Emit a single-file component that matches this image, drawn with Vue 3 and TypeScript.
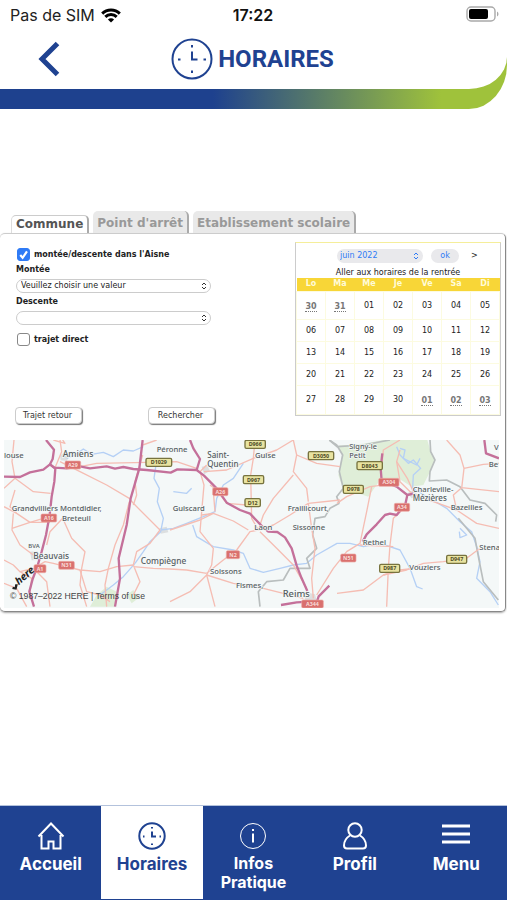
<script setup lang="ts">
import { ref } from 'vue'

interface Day { n: string; outside?: boolean }
interface MapLabel { t: string; x: number; y: number; s?: number }
interface Shield { t: string; x: number; y: number; w: number; kind: 'red' | 'yellow' }

const tabs = ['Commune', "Point d'arrêt", 'Etablissement scolaire']
const activeTab = ref(0)
const inAisne = ref(true)
const direct = ref(false)

const weekdays = ['Lo', 'Ma', 'Me', 'Je', 'Ve', 'Sa', 'Di']
const pad = (n: number) => String(n).padStart(2, '0')
const days: Day[] = [
  { n: '30', outside: true },
  { n: '31', outside: true },
  ...Array.from({ length: 30 }, (_, i) => ({ n: pad(i + 1) })),
  { n: '01', outside: true },
  { n: '02', outside: true },
  { n: '03', outside: true },
]
const weeks = Array.from({ length: 5 }, (_, i) => days.slice(i * 7, i * 7 + 7))

const motorways = [
  'M138 15L162 44L158 72L150 88L166 100L163 140L155 185L149 240L138 300L125 350L112 395L98 432L88 470L102 515',
  'M12 125L60 126L90 112L130 104L150 88L162 98L200 100L240 94L270 100L320 94L345 101L370 96L400 102L440 105L512 113L532 103L590 105L612 122L650 160L680 203L720 225L750 236L790 278L805 290L832 291L855 307L875 340L890 392L905 430L922 468',
  'M428 15L418 100L392 190L380 270L356 370L360 430L345 515',
  'M570 15L580 40L600 72L590 105',
  'M843 510L890 502L930 500M950 502L956 484L988 452',
  'M1147 55L1142 100L1145 138L1190 155L1222 180L1240 176M1222 180L1216 208L1190 240L1170 236L1155 240L1130 268L1100 298L1088 320',
  'M1453 15L1458 55L1497 70',
]
const roads = [
  'M12 160L45 130L100 170L152 175M45 130L36 80L42 15M12 215L50 235L90 262L150 262M50 235L30 215L45 165M40 235L36 285L60 330L100 360',
  'M36 280L90 262L130 250M12 375L40 390L60 410L100 400M110 395L135 380L160 385L240 405L300 410L350 395L400 390',
  'M180 80L240 110L320 150L388 190L400 205L480 285M165 98L185 50L180 15M240 95L290 85L440 82L530 80L590 100',
  'M188 250L215 310L255 350L245 400L240 450L260 515M188 250L150 290L140 330M388 200L370 270L345 330L325 400L315 450L320 515',
  'M160 15L195 25L188 15M240 405L260 470L300 480L330 500M400 390L410 350L450 325L480 285M400 390L420 440L400 480M400 395L460 400L510 402L560 405L620 415',
  'M100 400L140 440L150 515M60 410L95 430L90 470M428 30L470 15M400 210L410 180L405 140L428 60',
  'M600 110L612 150L605 230L600 290L640 340L635 390L620 420L645 515M620 420L570 470L510 500M620 415L670 375L710 345L750 290L775 285',
  'M605 240L640 235L700 258L745 285M640 235L600 255L510 285M612 110L680 105L760 70L830 45L880 15L890 60L880 110L920 160L925 200',
  'M765 15L760 70L752 120L755 250L775 285M640 170L645 230M775 285L790 240L820 190L880 120M775 285L820 270L870 240L925 205L1020 195',
  'M780 290L830 340L880 390L920 460M620 420L700 445L790 460L850 475L910 490M940 490L935 430L945 340L935 280L925 205M890 60L950 85L1020 95',
  'M950 480L1000 400L1040 350L1080 325L1100 230L1115 155M1011 205L1040 185L1110 155L1190 145M1200 15L1150 45L1145 100M1190 80L1200 140L1235 175',
  'M1080 330L1180 335M1222 210L1180 250L1170 330L1165 400L1160 515M1011 475L1090 465L1150 420L1220 405L1270 385L1330 380L1400 370L1440 340',
  'M1340 15L1380 60L1392 100L1385 160M1392 100L1450 88L1497 85M1240 178L1300 200L1370 225L1430 265L1497 280M1370 225L1360 180L1385 158L1497 170M1190 240L1220 205',
  'M1200 45L1190 80L1222 130L1240 170M1150 420L1200 405L1240 400M12 445L50 460L80 515M630 150L650 165L680 205L740 210M620 90L600 110',
]
const rivers = [
  'M225 60L250 42L275 58L310 52L340 65L370 45L400 48L430 35M200 70L225 60',
  'M470 75L462 130L478 160L472 200L490 250L482 290L450 320L430 350L405 385M482 285L520 280L560 265L610 245L645 230L650 190L670 150L700 130L730 85',
  'M578 270L590 305L640 335L700 345L730 355L750 400L790 412L840 400L880 390L920 385L950 360L1011 325L1050 325L1090 335L1140 325L1200 345L1230 400L1250 455L1268 462',
  'M520 170L560 175L575 160M1190 35L1200 60L1225 85L1240 75L1262 100L1240 120L1238 160L1290 190L1340 220L1380 260L1415 290L1430 335L1440 380L1430 430L1470 470L1495 510M1380 280L1400 300L1380 308L1378 290',
  'M1200 40L1215 45L1210 70L1250 90L1260 70M405 385L370 425L340 450L300 480',
]
const borders = [
  'M988 15L1010 30L1028 60L1018 110L1030 160L1010 185L1018 205',
  'M1018 205L990 220L975 245L945 250L938 300L950 340L920 370L930 400L870 400L850 435L800 440L775 470L780 515',
  'M988 15L1011 35L1090 30L1170 15M1290 15L1292 50L1305 75L1290 110L1288 138L1340 135L1380 155L1410 195L1455 205L1490 240L1487 260',
  'M1375 250L1425 310L1438 380L1450 440L1495 495',
]

const labels: MapLabel[] = [
  { t: 'louse', x: 12, y: 68 },
  { t: 'Amiens', x: 188, y: 65, s: 26 },
  { t: 'Péronne', x: 470, y: 50 },
  { t: 'Grandvilliers', x: 35, y: 228 },
  { t: 'Montdidier,', x: 180, y: 228 },
  { t: 'Breteuil', x: 186, y: 257 },
  { t: 'BVA', x: 85, y: 339, s: 18 },
  { t: 'Beauvais', x: 100, y: 373, s: 25 },
  { t: 'Compiègne', x: 422, y: 387, s: 25 },
  { t: 'Saint-', x: 622, y: 68, s: 24 },
  { t: 'Quentin', x: 622, y: 97, s: 24 },
  { t: 'Guise', x: 765, y: 68 },
  { t: 'Guiscard', x: 518, y: 228 },
  { t: 'Fraillicourt,', x: 863, y: 228 },
  { t: 'Laon', x: 763, y: 285 },
  { t: 'Sissonne', x: 878, y: 285 },
  { t: 'Soissons', x: 630, y: 417 },
  { t: 'Fismes,', x: 708, y: 460 },
  { t: 'Reims', x: 848, y: 487, s: 28 },
  { t: 'Signy-le', x: 1048, y: 43, s: 22 },
  { t: 'Petit', x: 1048, y: 68, s: 22 },
  { t: 'Charleville-', x: 1238, y: 170 },
  { t: 'Mézières', x: 1238, y: 199, s: 24 },
  { t: 'Rethel', x: 1088, y: 330 },
  { t: 'Vouziers', x: 1228, y: 404 },
  { t: 'Bazeilles', x: 1352, y: 225 },
  { t: 'Stena', x: 1438, y: 345 },
  { t: 'V', x: 1482, y: 45 },
  { t: 'Be', x: 1466, y: 97 },
]
const shields: Shield[] = [
  { t: 'A29', x: 195, y: 78, w: 47, kind: 'red' },
  { t: 'A16', x: 123, y: 237, w: 47, kind: 'red' },
  { t: 'A1', x: 102, y: 389, w: 36, kind: 'red' },
  { t: 'N31', x: 176, y: 379, w: 47, kind: 'red' },
  { t: 'A26', x: 638, y: 158, w: 46, kind: 'red' },
  { t: 'N2', x: 679, y: 347, w: 40, kind: 'red' },
  { t: 'A304', x: 1136, y: 130, w: 61, kind: 'red' },
  { t: 'A34', x: 1183, y: 205, w: 46, kind: 'red' },
  { t: 'N51', x: 1022, y: 357, w: 46, kind: 'red' },
  { t: 'A344', x: 905, y: 495, w: 65, kind: 'red' },
  { t: 'D1029', x: 438, y: 70, w: 77, kind: 'yellow' },
  { t: 'D966', x: 735, y: 16, w: 61, kind: 'yellow' },
  { t: 'D967', x: 730, y: 122, w: 61, kind: 'yellow' },
  { t: 'D12', x: 735, y: 191, w: 46, kind: 'yellow' },
  { t: 'D3050', x: 925, y: 50, w: 76, kind: 'yellow' },
  { t: 'D8043', x: 1071, y: 80, w: 76, kind: 'yellow' },
  { t: 'D978', x: 1030, y: 151, w: 60, kind: 'yellow' },
  { t: 'D987', x: 1139, y: 388, w: 60, kind: 'yellow' },
  { t: 'D947', x: 1340, y: 361, w: 60, kind: 'yellow' },
]
</script>

<template>
  <div class="page">
    <header class="masthead">
      <div class="masthead-inner">
        <div class="status">
          <span class="carrier">
            Pas de SIM
            <svg class="wifi" viewBox="0 0 20 15" aria-hidden="true">
              <path d="M1.2 5.6a12.6 12.6 0 0 1 17.6 0" />
              <path d="M4.3 8.9a8.2 8.2 0 0 1 11.4 0" />
              <path class="dot" d="M10 14.6l-3.1-3.1a4.4 4.4 0 0 1 6.2 0z" />
            </svg>
          </span>
          <span class="clock">17:22</span>
          <svg class="battery" viewBox="0 0 33 16" aria-hidden="true">
            <rect x="1" y="1" width="28" height="14" rx="4" fill="none" stroke="#a9a9a9" stroke-width="1.4" />
            <rect x="3" y="3" width="19" height="10" rx="2" fill="#000" />
            <path d="M31 5.5a2.8 2.8 0 0 1 0 5z" fill="#a9a9a9" />
          </svg>
        </div>
        <div class="title-row">
          <button class="back" type="button" aria-label="Retour">
            <svg viewBox="0 0 22 36" aria-hidden="true"><path d="M19.500 2.500L4 18L19.500 33.500" /></svg>
          </button>
          <h1>
            <svg class="title-clock" viewBox="0 0 42 42" aria-hidden="true">
              <circle cx="21" cy="21" r="19.500" />
              <path class="hands" d="M21 13.500V21.500H26.500" />
              <path class="ticks" d="M21 7V9.500M21 32.500V35M7 21.500H9.500M32.500 21.500H35" />
            </svg>
            HORAIRES
          </h1>
        </div>
      </div>
    </header>

    <main>
      <div class="tabs" role="tablist">
        <button
          v-for="(tab, i) in tabs"
          :key="tab"
          type="button"
          role="tab"
          class="tab"
          :class="{ active: i === activeTab }"
          :aria-selected="i === activeTab"
          @click="activeTab = i"
        >{{ tab }}</button>
      </div>

      <section class="panel">
        <div class="search">
          <form class="form" @submit.prevent>
            <label class="check">
              <span class="box">
                <input v-model="inAisne" type="checkbox">
                <svg v-if="inAisne" viewBox="0 0 12 12" aria-hidden="true"><path d="M3 6.400L5.200 9L9.200 3.200" /></svg>
              </span>
              montée/descente dans l'Aisne
            </label>
            <label class="name" for="from">Montée</label>
            <div class="select">
              <select id="from"><option>Veuillez choisir une valeur</option></select>
              <svg viewBox="0 0 6 8" aria-hidden="true"><path d="M1 3L3 1L5 3M1 5L3 7L5 5" /></svg>
            </div>
            <label class="name" for="to">Descente</label>
            <div class="select">
              <select id="to"><option></option></select>
              <svg viewBox="0 0 6 8" aria-hidden="true"><path d="M1 3L3 1L5 3M1 5L3 7L5 5" /></svg>
            </div>
            <label class="check direct">
              <span class="box">
                <input v-model="direct" type="checkbox">
                <svg v-if="direct" viewBox="0 0 12 12" aria-hidden="true"><path d="M3 6.400L5.200 9L9.200 3.200" /></svg>
              </span>
              trajet direct
            </label>
            <div class="actions">
              <button type="button">Trajet retour</button>
              <button type="submit">Rechercher</button>
            </div>
          </form>

          <div class="calendar">
            <div class="cal-head">
              <div class="month">
                <select aria-label="Mois"><option>juin 2022</option></select>
                <svg viewBox="0 0 6 8" aria-hidden="true"><path d="M1 3L3 1L5 3M1 5L3 7L5 5" /></svg>
              </div>
              <button class="ok" type="button">ok</button>
              <a class="next" href="#">&gt;</a>
            </div>
            <a class="rentree" href="#">Aller aux horaires de la rentrée</a>
            <table>
              <thead>
                <tr><th v-for="d in weekdays" :key="d" scope="col">{{ d }}</th></tr>
              </thead>
              <tbody>
                <tr v-for="(week, w) in weeks" :key="w">
                  <td v-for="(day, d) in week" :key="d">
                    <a href="#" :class="{ outside: day.outside }">{{ day.n }}</a>
                  </td>
                </tr>
              </tbody>
            </table>
          </div>
        </div>

        <svg class="map" viewBox="12 15 1485 504" role="img" aria-label="Carte">
          <rect x="12" y="15" width="1485" height="504" fill="#f4f8f8" />
          <g class="woods">
            <path d="M1015 32L1090 26L1150 15L1282 15L1292 50L1305 75L1290 110L1270 150L1235 155L1195 130L1140 135L1105 185L1060 170L1030 165L1015 120L1026 60Z" />
            <path d="M270 515L290 480L320 455L350 470L345 515Z" />
            <path d="M380 480L400 465L415 490L395 505Z" />
          </g>
          <g class="towns">
            <path d="M180 62L195 50L210 60L200 78L182 76Z" />
            <path d="M605 95L622 92L630 108L612 118Z" />
            <path d="M90 350L112 348L115 375L95 376Z" />
            <path d="M910 470L945 478L952 505L918 505Z" />
            <path d="M478 280L500 275L505 292L482 296Z" />
            <path d="M1222 175L1240 165L1255 182L1235 190Z" />
          </g>
          <g class="rivers"><path v-for="d in rivers" :key="d" :d="d" /></g>
          <g class="borders"><path v-for="d in borders" :key="d" :d="d" /></g>
          <g class="roads"><path v-for="d in roads" :key="d" :d="d" /></g>
          <g class="motorways"><path v-for="d in motorways" :key="d" :d="d" /></g>
          <g v-for="s in shields" :key="s.t" :class="['shield', s.kind]">
            <rect :x="s.x" :y="s.y" :width="s.w" height="24" rx="4" />
            <text :x="s.x + s.w / 2" :y="s.y + 18">{{ s.t }}</text>
          </g>
          <g class="places">
            <text v-for="l in labels" :key="l.t" :x="l.x" :y="l.y" :font-size="l.s ?? 23">{{ l.t }}</text>
          </g>
          <g class="brand" transform="translate(50 456) rotate(-41)">
            <path d="M-14 -4L-6 6L8 -4L2 -9L-5 -3L-8 -8Z" />
            <text x="8" y="0">here</text>
          </g>
          <text class="copyright" x="30" y="491">© 1987–2022 HERE | Terms of use</text>
        </svg>
      </section>
    </main>

    <nav class="tabbar">
      <a href="#">
        <svg viewBox="0 0 28 28" aria-hidden="true"><path d="M1.500 14.500L14 1.500L26.500 14.500M4.500 13V26.500H11.500V19.500H16.500V26.500H23.500V13" /></svg>
        <span>Accueil</span>
      </a>
      <a href="#" class="current" aria-current="page">
        <svg viewBox="0 0 28 28" aria-hidden="true">
          <circle cx="14" cy="14" r="12.700" />
          <path d="M14 9.500V14.500H18M14 5V6.500M14 21.500V23M5 14.500H6.500M21.500 14.500H23" />
        </svg>
        <span>Horaires</span>
      </a>
      <a href="#">
        <svg class="fine" viewBox="0 0 28 28" aria-hidden="true">
          <circle cx="14" cy="14" r="12.500" />
          <path class="stem" d="M14 11.500V20.500M14 7V9" />
        </svg>
        <span class="two">Infos<br>Pratique</span>
      </a>
      <a href="#">
        <svg viewBox="0 0 28 28" aria-hidden="true">
          <circle cx="14" cy="8" r="6.700" />
          <path d="M9 13.500C5 16 3 19.500 3 23.500Q3 26.500 6 26.500H22Q25 26.500 25 23.500C25 19.500 23 16 19 13.500" />
        </svg>
        <span>Profil</span>
      </a>
      <a href="#">
        <svg class="thick" viewBox="0 0 28 28" aria-hidden="true"><path d="M0 4H28M0 12H28M0 20H28" /></svg>
        <span>Menu</span>
      </a>
    </nav>
  </div>
</template>

<style>
body {
  margin: 0;
  background: #fff;
}
</style>

<style scoped>
* {
  box-sizing: border-box;
}
.page {
  display: flex;
  flex-direction: column;
  min-height: 100vh;
  font-family: "DejaVu Sans", Verdana, sans-serif;
  font-size: 8px;
  color: #222;
}
a {
  color: inherit;
  text-decoration: none;
}
button,
select {
  appearance: none;
  margin: 0;
  font: inherit;
  color: inherit;
}

/* Header */
.masthead {
  padding-bottom: 20px;
  border-bottom-right-radius: 38px 44px;
  background: linear-gradient(90deg, #1e418e 42%, #9fc23b 87%);
}
.masthead-inner {
  height: 89px;
  border-bottom-right-radius: 38px 32px;
  background: #fff;
}
.status {
  display: grid;
  grid-template-columns: 1fr auto 1fr;
  align-items: center;
  height: 30px;
  padding: 0 8px 0 10px;
  font: 16px/20px Inter, sans-serif;
  color: #222;
}
.carrier {
  display: flex;
  align-items: center;
  gap: 6px;
}
.wifi {
  width: 20px;
  height: 15px;
  fill: none;
  stroke: #000;
  stroke-width: 3;
}
.wifi .dot {
  fill: #000;
  stroke: none;
}
.clock {
  margin-right: 3px;
  font-weight: 600;
  color: #111;
}
.battery {
  justify-self: end;
  width: 33px;
  height: 16px;
  margin-bottom: 2px;
}
.title-row {
  display: grid;
  grid-template-columns: 1fr auto 1fr;
  align-items: center;
  height: 57px;
}
.back {
  justify-self: start;
  width: 22px;
  height: 36px;
  margin-left: 38px;
  padding: 0;
  border: 0;
  background: none;
}
.back svg {
  display: block;
  width: 22px;
  height: 36px;
  fill: none;
  stroke: #1f4291;
  stroke-width: 5;
}
h1 {
  display: flex;
  align-items: center;
  gap: 5px;
  margin: 0 2px 0 0;
  font: bold 24px/30px Roboto, sans-serif;
  color: #1f4291;
}
.title-clock {
  width: 42px;
  height: 42px;
  fill: none;
  stroke: #1f4291;
  stroke-width: 2;
}

/* Tabs */
main {
  flex: 1;
  padding-top: 102px;
}
.tabs {
  display: flex;
  align-items: flex-end;
  gap: 4px;
  padding: 0 11px;
}
.tab {
  height: 22px;
  padding: 3px 4px 1px;
  border: 0;
  border-right: 2px solid #aaa;
  border-radius: 5px 5px 0 0;
  background: #e9e9e9;
  font-size: 12px;
  line-height: 16px;
  font-weight: bold;
  color: #999;
}
.tab.active {
  height: 18px;
  padding: 0 4px 2px;
  border-top: 1px solid #ccc;
  border-left: 1px solid #ddd;
  background: #fff;
  color: #555;
}

/* Search panel */
.panel {
  margin-right: 1px;
  padding: 8px 6px 3px 4px;
  border: 1px solid #ccc;
  border-right-color: #888;
  border-bottom-color: #888;
  border-left: 0;
  border-radius: 5px;
  box-shadow: 0 1px 2px #aaa;
}
.search {
  display: flex;
  justify-content: space-between;
  align-items: flex-start;
  gap: 20px;
  margin-right: -2px;
  padding-bottom: 16px;
}
.form {
  flex: 1;
  max-width: 207px;
  padding: 6px 0 0 12px;
  line-height: 12px;
}
.check {
  display: flex;
  align-items: center;
  gap: 4px;
  padding-left: 1px;
  font-weight: bold;
}
.box {
  position: relative;
  width: 13px;
  height: 13px;
}
.box input {
  appearance: none;
  display: block;
  width: 13px;
  height: 13px;
  margin: 0;
  border: 1px solid #888;
  border-radius: 3px;
  background: #fff;
}
.box input:checked {
  border-color: #2f7bf6;
  background: #2f7bf6;
}
.box svg {
  position: absolute;
  inset: 0;
  fill: none;
  stroke: #fff;
  stroke-width: 2;
  pointer-events: none;
}
.name {
  display: block;
  padding: 3px 0;
  font-weight: bold;
}
.select {
  position: relative;
}
.select select {
  display: block;
  width: 100%;
  height: 14px;
  padding: 0 4px;
  border: 1px solid #ccc;
  border-radius: 7px;
  background: #fff;
  line-height: 12px;
}
.select svg,
.month svg {
  position: absolute;
  top: 3px;
  right: 4px;
  width: 6px;
  height: 8px;
  fill: none;
  stroke: #333;
  pointer-events: none;
}
.direct {
  margin-top: 8px;
}
.actions {
  display: flex;
  justify-content: space-between;
  margin: 61px -4px 0 -1px;
}
.actions button {
  width: 67px;
  height: 17px;
  padding: 0 2px 0 0;
  border: 1px solid #ccc;
  border-radius: 4px;
  background: #fff;
  box-shadow: 1px 1px 1px #777;
  color: #333;
}

/* Calendar */
.calendar {
  width: 206px;
  border: 1px solid #ccc;
  border-top-color: #f5ee9a;
}
.cal-head {
  display: flex;
  align-items: center;
  height: 25px;
  padding-left: 41px;
}
.month {
  position: relative;
  width: 86px;
}
.month select {
  display: block;
  width: 100%;
  height: 14px;
  padding: 0 3px;
  border: 0;
  border-radius: 7px;
  background: #e9e9ec;
  color: #2f7bf6;
}
.month svg {
  stroke: #2f7bf6;
}
.ok {
  width: 28px;
  height: 14px;
  margin-left: 8px;
  padding: 0;
  border: 0;
  border-radius: 7px;
  background: #e9e9ec;
  color: #2f7bf6;
}
.next {
  margin-left: 12px;
}
.rentree {
  display: block;
  line-height: 10px;
  text-align: center;
}
table {
  width: 100%;
  border-collapse: collapse;
  table-layout: fixed;
}
th {
  height: 13px;
  padding: 0;
  background: #f8d637;
  line-height: 12px;
  color: #fffbd8;
}
td {
  height: 22px;
  padding: 0;
  border: 1px solid #fcfbe0;
  text-align: center;
}
tbody tr:first-child td {
  height: 28px;
}
tbody tr:last-child td {
  height: 29px;
}
.outside {
  display: inline-block;
  margin-top: 3px;
  border-bottom: 1px dotted #777;
  font-weight: bold;
  color: #777;
}

/* Map */
.map {
  display: block;
  width: 100%;
  height: auto;
}
.woods {
  fill: #dfeed8;
}
.towns {
  fill: #dcdfe0;
}
.rivers,
.borders,
.roads,
.motorways {
  fill: none;
  stroke-linejoin: round;
}
.rivers {
  stroke: #b5d0f5;
  stroke-width: 4;
}
.borders {
  stroke: #b9bebe;
  stroke-width: 5;
}
.roads {
  stroke: #f5bdb3;
  stroke-width: 4;
}
.motorways {
  stroke: #c4709a;
  stroke-width: 7;
}
.shield text {
  font: bold 16px "Noto Sans", sans-serif;
  text-anchor: middle;
}
.red rect {
  fill: #d9706e;
  stroke: #eda9a4;
  stroke-width: 2;
}
.red text {
  fill: #f8dcd8;
}
.yellow rect {
  fill: #e8e3a0;
  stroke: #77733f;
  stroke-width: 4;
}
.yellow text {
  fill: #4d4a25;
}
.places text {
  font-family: "Noto Sans", sans-serif;
  font-weight: 500;
  fill: #555c60;
  stroke: #f4f8f8;
  stroke-width: 4;
  paint-order: stroke;
}
.brand {
  fill: #222;
}
.brand text {
  font: italic bold 31px "Noto Sans", sans-serif;
}
.copyright {
  font: 26px "Liberation Sans", Arial, sans-serif;
  fill: #444;
}

/* Bottom navigation */
.tabbar {
  display: grid;
  grid-template-columns: repeat(5, 1fr);
  height: 95px;
  border-top: 1px solid #b3c2dc;
  border-bottom: 1px solid #1f4291;
  background: #1f4291;
  font: bold 17px/20px Inter, sans-serif;
  color: #fff;
}
.tabbar a {
  display: flex;
  flex-direction: column;
  align-items: center;
  gap: 4px;
  padding-top: 16px;
  text-align: center;
}
.tabbar .current {
  background: #fff;
  color: #1f4291;
}
.tabbar svg {
  width: 28px;
  height: 28px;
  fill: none;
  stroke: currentColor;
  stroke-width: 2;
}
.tabbar .fine {
  stroke-width: 1;
}
.fine .stem {
  stroke-width: 2;
}
.tabbar .thick {
  stroke-width: 3;
}
.two {
  font-size: 16px;
  line-height: 19px;
}
</style>
